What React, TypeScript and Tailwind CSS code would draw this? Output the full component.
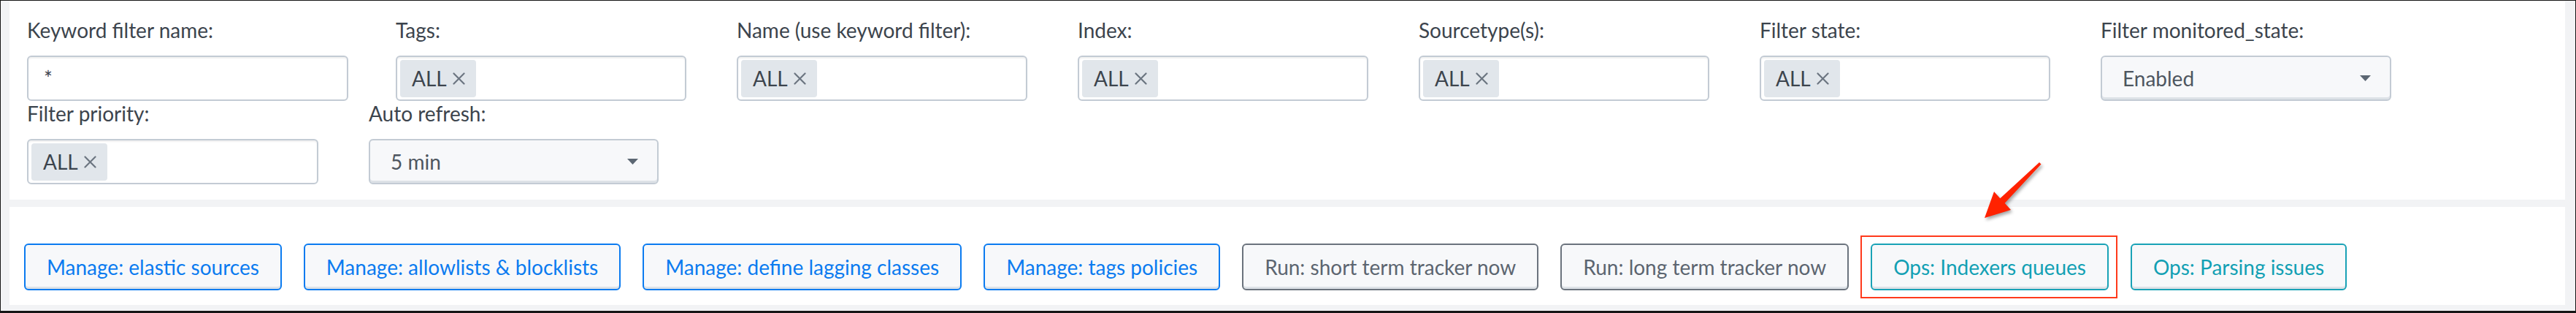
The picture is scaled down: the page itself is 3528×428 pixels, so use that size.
const font = { fontFamily: 'Lato, "Noto Sans", sans-serif' };

type Field = {
  label: string;
  kind: 'text' | 'multi' | 'select';
  value?: string;
  cls: string;
};

const row1: Field[] = [
  { label: 'Keyword filter name:', kind: 'text', value: '*', cls: 'w-[440px] mr-[65px]' },
  { label: 'Tags:', kind: 'multi', cls: 'w-[398px] mr-[69px]' },
  { label: 'Name (use keyword filter):', kind: 'multi', cls: 'w-[398px] mr-[69px]' },
  { label: 'Index:', kind: 'multi', cls: 'w-[398px] mr-[69px]' },
  { label: 'Sourcetype(s):', kind: 'multi', cls: 'w-[398px] mr-[69px]' },
  { label: 'Filter state:', kind: 'multi', cls: 'w-[398px] mr-[69px]' },
  { label: 'Filter monitored_state:', kind: 'select', value: 'Enabled', cls: 'w-[398px]' },
];

const row2: Field[] = [
  { label: 'Filter priority:', kind: 'multi', cls: 'w-[399px] mr-[69px]' },
  { label: 'Auto refresh:', kind: 'select', value: '5 min', cls: 'w-[397px]' },
];

const buttons = [
  { text: 'Manage: elastic sources', cls: 'border-[#0b7bf0] text-[#0b7bf0]' },
  { text: 'Manage: allowlists & blocklists', cls: 'border-[#0b7bf0] text-[#0b7bf0]' },
  { text: 'Manage: define lagging classes', cls: 'border-[#0b7bf0] text-[#0b7bf0]' },
  { text: 'Manage: tags policies', cls: 'border-[#0b7bf0] text-[#0b7bf0]' },
  { text: 'Run: short term tracker now', cls: 'border-[#6b737d] text-[#5c6570]' },
  { text: 'Run: long term tracker now', cls: 'border-[#6b737d] text-[#5c6570]' },
  { text: 'Ops: Indexers queues', cls: 'border-[#19a2b6] text-[#12a0b4]', marked: true },
  { text: 'Ops: Parsing issues', cls: 'border-[#19a2b6] text-[#12a0b4]' },
];

const Chip = () => (
  <span className="flex h-[51px] items-center gap-[8px] rounded-[4px] bg-[#e1e6eb] pl-[16px] pr-[15px] text-[#3c444d]">
    ALL
    <svg width="17" height="17" viewBox="0 0 17 17" fill="none" stroke="#6b7580" strokeWidth="2.2" strokeLinecap="round">
      <line x1="1.5" y1="1.5" x2="15.5" y2="15.5" />
      <line x1="15.5" y1="1.5" x2="1.5" y2="15.5" />
    </svg>
  </span>
);

const Input = ({ f }: { f: Field }) => {
  if (f.kind === 'text') {
    return (
      <div className="flex h-[62px] items-center rounded-[6px] border-2 border-[#c3cbd4] bg-white px-[21px] text-[#3c444d] shadow-[inset_0_2px_2px_rgba(0,0,0,0.06)]">
        {f.value}
      </div>
    );
  }
  if (f.kind === 'multi') {
    return (
      <div className="flex h-[62px] items-center rounded-[6px] border-2 border-[#c3cbd4] bg-white px-[4px] shadow-[inset_0_2px_2px_rgba(0,0,0,0.06)]">
        <Chip />
      </div>
    );
  }
  return (
    <div className="flex h-[62px] items-center justify-between rounded-[6px] border-2 border-[#c3cbd4] bg-[#f7f8fa] pl-[28px] pr-[26px] text-[#4e5660] shadow-[inset_0_-3px_0_#dde2e7]">
      <span>{f.value}</span>
      <svg width="15" height="8" viewBox="0 0 15 8">
        <polygon points="0,0 15,0 7.5,8" fill="#5c6773" />
      </svg>
    </div>
  );
};

const FieldBlock = ({ f }: { f: Field }) => (
  <div className={f.cls}>
    <div className="mb-[17px] whitespace-nowrap leading-[35px] text-[#3c444d]">{f.label}</div>
    <Input f={f} />
  </div>
);

export default function App() {
  return (
    <div
      style={font}
      className="relative box-border flex h-[428px] w-[3528px] flex-col gap-[10px] border-x border-t border-b-[3px] border-[#161616] bg-[#f2f3f5] pb-[8px] pl-[12px] pr-[14px] text-[28px]"
    >
      <div className="h-[272px] bg-white pl-[24px] pt-[23px]">
        <div className="flex">
          {row1.map((f) => (
            <FieldBlock key={f.label} f={f} />
          ))}
        </div>
        <div className="flex">
          {row2.map((f) => (
            <FieldBlock key={f.label} f={f} />
          ))}
        </div>
      </div>

      <div className="flex h-[134px] items-start gap-[30px] bg-white pl-[20px] pt-[50px]">
        {buttons.map((b) => (
          <div key={b.text} className="relative">
            <button
              className={`flex h-[64px] items-center whitespace-nowrap rounded-[6px] border-2 bg-[#f7f8fa] px-[29px] shadow-[inset_0_-3px_0_#dde2e7] ${b.cls}`}
            >
              {b.text}
            </button>
            {b.marked && (
              <div className="pointer-events-none absolute -bottom-[11px] -left-[14px] -right-[12px] -top-[11px] border-2 border-[#ff3a1c]" />
            )}
          </div>
        ))}
      </div>

      {/* annotation arrow */}
      <svg
        className="pointer-events-none absolute left-[2709px] top-[214px] drop-shadow-[2px_3px_2px_rgba(0,0,0,0.35)]"
        width="95"
        height="95"
        viewBox="0 0 95 95"
      >
        <polygon
          points="8,83 21,47 29.3,56.3 83,7 85.5,9.5 35.7,62.7 44,72"
          fill="#ff2200"
        />
      </svg>
    </div>
  );
}
